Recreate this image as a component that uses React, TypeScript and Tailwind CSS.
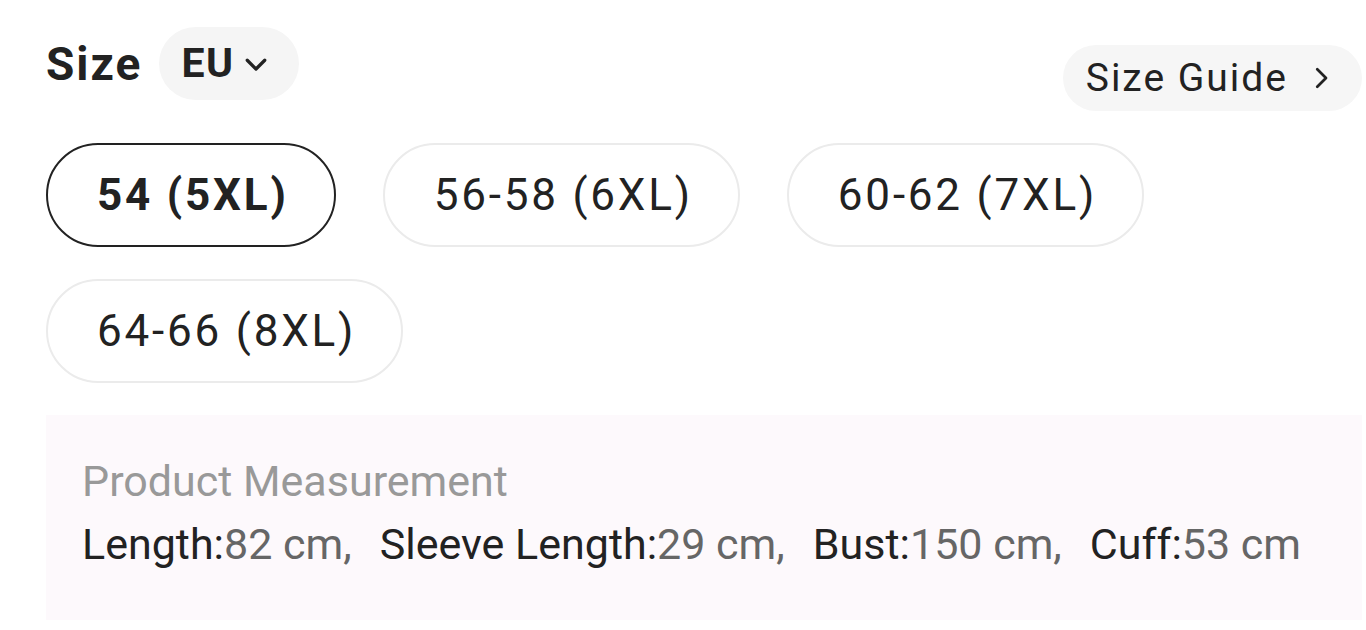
import React from "react";

const sizes = [
  { label: "54 (5XL)", active: true },
  { label: "56-58 (6XL)", active: false },
  { label: "60-62 (7XL)", active: false },
  { label: "64-66 (8XL)", active: false },
];

const measures = [
  { name: "Length", value: "82 cm" },
  { name: "Sleeve Length", value: "29 cm" },
  { name: "Bust", value: "150 cm" },
  { name: "Cuff", value: "53 cm" },
];

const App = () => {
  return (
    <div
      className="w-[1366px] h-[630px] bg-white pl-[46px] pr-[4px] overflow-hidden text-[#222]"
      style={{ fontFamily: "Roboto, 'Liberation Sans', sans-serif" }}
    >
      <div className="flex items-start justify-between pt-[27px]">
        <div className="flex items-center gap-[17px]">
          <span className="text-[46px] font-bold leading-none tracking-[2px]">Size</span>
          <button className="h-[73px] pl-[22px] pr-[28px] rounded-full bg-[#f5f5f5] flex items-center gap-[7px]">
            <span className="text-[41px] font-bold leading-none tracking-[1.5px]">EU</span>
            <svg viewBox="0 0 24 24" className="w-[30px] h-[30px]" fill="none" stroke="#222" strokeWidth="2.6" strokeLinecap="round" strokeLinejoin="round">
              <path d="m5 9 7 7 7-7" />
            </svg>
          </button>
        </div>
        <button className="mt-[18px] h-[66px] pl-[23px] pr-[26px] rounded-full bg-[#f6f6f6] flex items-center gap-[18px]">
          <span className="text-[39px] leading-none tracking-[2px]">Size Guide</span>
          <svg viewBox="0 0 24 24" className="w-[30px] h-[30px]" fill="none" stroke="#222" strokeWidth="2.2" strokeLinecap="round" strokeLinejoin="round">
            <path d="m9 5 7 7-7 7" />
          </svg>
        </button>
      </div>

      <div className="flex flex-wrap gap-x-[47px] gap-y-[32px] mt-[32px] w-[1140px]">
        {sizes.map((s) => (
          <div
            key={s.label}
            className={
              s.active
                ? "h-[104px] pl-[49px] pr-[45px] rounded-full border-2 border-[#222] flex items-center text-[44px] tracking-[2.8px] font-bold"
                : "h-[104px] pl-[49px] pr-[45px] rounded-full border-2 border-[#ebebeb] flex items-center text-[44px] tracking-[2.8px]"
            }
          >
            {s.label}
          </div>
        ))}
      </div>

      <div className="mt-[32px] h-[205px] bg-[#fdf9fc] px-[36px] pt-[38px]">
        <div className="text-[43px] text-[#999] leading-[56px]">Product Measurement</div>
        <div className="text-[43px] leading-[56px] mt-[7px] flex gap-[28px]">
          {measures.map((m, i) => (
            <span key={m.name}>
              {m.name}:<span className="text-[#666]">{m.value}{i < measures.length - 1 ? "," : ""}</span>
            </span>
          ))}
        </div>
      </div>
    </div>
  );
};

export default App;
